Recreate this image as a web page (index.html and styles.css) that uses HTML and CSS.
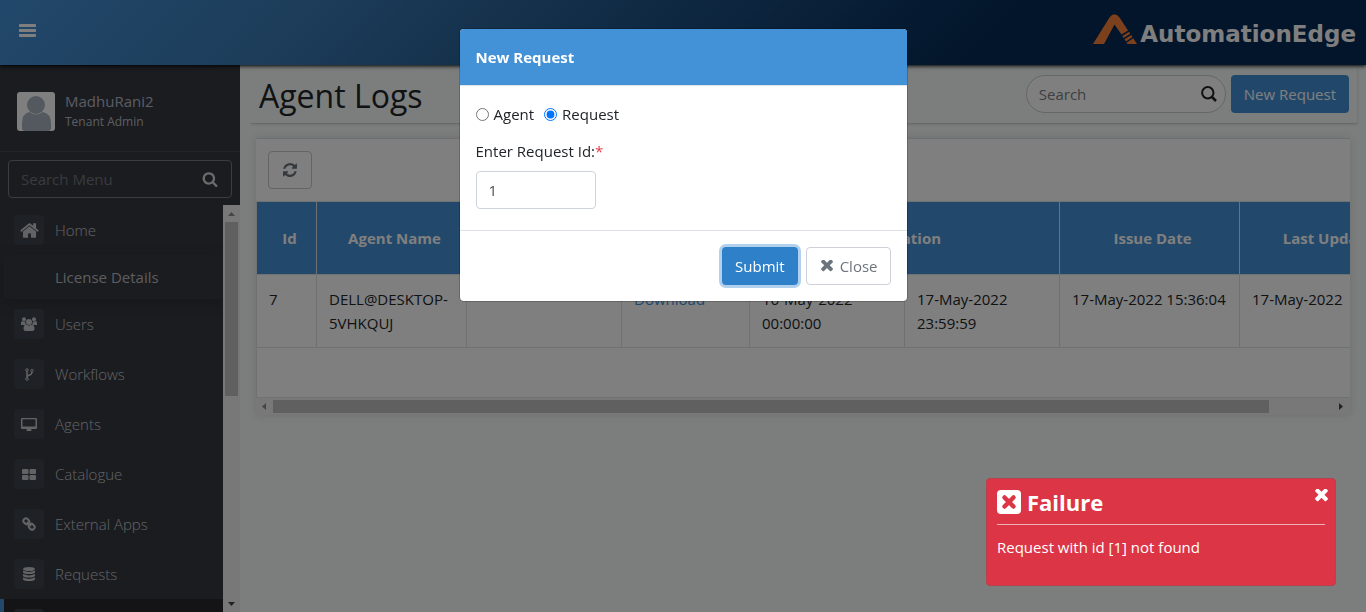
FILE: index.html
```html
<!DOCTYPE html>
<html lang="en">
<head>
<meta charset="utf-8">
<title>Agent Logs</title>
<link rel="stylesheet" href="styles.css">
</head>
<body>
<svg class="sprite" aria-hidden="true">
  <symbol id="i-search" viewBox="0 0 1664 1792"><path d="M1152 832q0-185-131.500-316.500t-316.500-131.500-316.500 131.500-131.500 316.500 131.500 316.500 316.500 131.500 316.500-131.500 131.500-316.500zm512 832q0 52-38 90t-90 38q-54 0-90-38l-343-342q-179 124-399 124-143 0-273.500-55.500t-225-150-150-225-55.500-273.500 55.500-273.500 150-225 225-150 273.500-55.500 273.500 55.500 225 150 150 225 55.500 273.500q0 220-124 399l343 343q37 37 37 90z"/></symbol>
  <symbol id="i-times" viewBox="296 430 1200 1190"><path d="M1490 1322q0 40-28 68l-136 136q-28 28-68 28t-68-28l-294-294-294 294q-28 28-68 28t-68-28l-136-136q-28-28-28-68t28-68l294-294-294-294q-28-28-28-68t28-68l136-136q28-28 68-28t68 28l294 294 294-294q28-28 68-28t68 28l136 136q28 28 28 68t-28 68l-294 294 294 294q28 28 28 68z"/></symbol>
</svg>

<header class="topbar">
  <button class="menu-toggle" aria-label="Toggle menu">
    <svg viewBox="0 0 17 13" width="17" height="13"><path d="M1 0h15a1 1 0 0 1 1 1v2H0V1a1 1 0 0 1 1-1zM0 5h17v3H0zM0 10h17v2a1 1 0 0 1-1 1H1a1 1 0 0 1-1-1z"/></svg>
  </button>
  <a class="brand" href="#">
    <svg class="brand-mark" viewBox="0 0 44 30" width="44" height="30"><path d="M0 30 16.500 3.500Q21.500-3 26.500 3.500L35 16.500 28.500 20.500 21.500 10.500 11 30z"/><path d="M29.300 22 36 17.800l1.300 2-6.700 4.200zM31.500 25.300 38.200 21l1.300 2-6.500 4.500zM33.500 28.800 40.300 24.300 44 30h-9.500z"/></svg>
    <span class="brand-name">AutomationEdge</span>
  </a>
</header>

<div class="layout">
  <aside class="sidebar">
    <div class="profile">
      <svg class="avatar" viewBox="0 0 38 39" width="38" height="39"><rect width="38" height="39" rx="3" fill="#fff"/><circle cx="19" cy="13" r="9" fill="#a9b2be"/><path d="M5 36V32Q5 21 12.500 20q6.500 5 13 0Q34 21 34 32v4q0 3-3 3H8q-3 0-3-3z" fill="#a9b2be"/></svg>
      <div>
        <div class="profile-name">MadhuRani2</div>
        <div class="profile-role">Tenant Admin</div>
      </div>
    </div>
    <div class="menu-search">
      <input type="text" placeholder="Search Menu" aria-label="Search Menu">
      <button aria-label="Search"><svg width="16" height="16"><use href="#i-search"/></svg></button>
    </div>
    <div class="menu-scroll">
      <nav class="menu">
        <a href="#"><span class="tile"><svg viewBox="60 240 1670 1310" width="19" height="15"><path d="M1472 992v480q0 26-19 45t-45 19h-384v-384h-256v384h-384q-26 0-45-19t-19-45v-480q0-1 .5-3t.5-3l575-474 575 474q1 2 1 6zm223-69l-62 74q-8 9-21 11h-3q-13 0-21-7l-692-577-692 577q-12 8-24 7-13-2-21-11l-62-74q-8-10-7-23.500t11-21.500l719-599q32-26 76-26t76 26l244 204v-195q0-14 9-23t23-9h192q14 0 23 9t9 23v408l219 182q10 8 11 21.500t-7 23.500z"/></svg></span>Home</a>
        <a href="#" class="sub">License Details</a>
        <a href="#"><span class="tile"><svg viewBox="0 0 16 14" width="16" height="14"><circle cx="3" cy="2.200" r="2"/><circle cx="13" cy="2.200" r="2"/><circle cx="8" cy="5" r="3"/><path d="M0 8V6q0-2 1.500-2Q3 5.200 4.300 4.300 4 6.500 5 8zM16 8V6q0-2-1.500-2-1.500 1.200-2.800.3.300 2.200-.7 3.700zM2.500 12q0-4.500 2.800-4.500 2.700 2 5.400 0 2.800 0 2.800 4.500 0 2-2 2h-7q-2 0-2-2z"/></svg></span>Users</a>
        <a href="#"><span class="tile"><svg viewBox="0 0 9 13" width="9" height="13" fill="none"><path d="M2 3v7M7 3.500Q7 6.500 4.500 7 2 7.500 2 9.500" stroke="currentColor" stroke-width="1.500"/><g fill="#3c424a" stroke="currentColor"><circle cx="2" cy="2" r="1.300"/><circle cx="2" cy="11" r="1.300"/><circle cx="7" cy="2.700" r="1.300"/></g></svg></span>Workflows</a>
        <a href="#"><span class="tile"><svg viewBox="0 0 16 13" width="16" height="13"><path fill-rule="evenodd" d="M1 0h14a1 1 0 0 1 1 1v9a1 1 0 0 1-1 1H1a1 1 0 0 1-1-1V1a1 1 0 0 1 1-1zm.5 1.300v7.200h13V1.300zM6 11h4l.5 1.200V13h-5v-.8z"/></svg></span>Agents</a>
        <a href="#"><span class="tile"><svg viewBox="0 0 14 11" width="14" height="11"><rect width="6.500" height="5" rx="1"/><rect x="7.500" width="6.500" height="5" rx="1"/><rect y="6" width="6.500" height="5" rx="1"/><rect x="7.500" y="6" width="6.500" height="5" rx="1"/></svg></span>Catalogue</a>
        <a href="#"><span class="tile"><svg viewBox="0 0 14 14" width="14" height="14" fill="none" stroke="currentColor" stroke-width="2"><rect x="1.300" y="1.800" width="6" height="5" rx="2.300" transform="rotate(45 4.300 4.300)"/><rect x="6.700" y="7.200" width="6" height="5" rx="2.300" transform="rotate(45 9.700 9.700)"/><path d="m5 5 4 4"/></svg></span>External Apps</a>
        <a href="#"><span class="tile"><svg viewBox="0 0 12 14" width="12" height="14"><ellipse cx="6" cy="2" rx="6" ry="2"/><path d="M0 3.500q6 2.800 12 0V5Q12 7 6 7T0 5zM0 7q6 2.800 12 0v1.500q0 2-6 2t-6-2zM0 10.500q6 2.800 12 0V12q0 2-6 2t-6-2z"/></svg></span>Requests</a>
        <a href="#" class="active" aria-label="Agent Logs"><span class="tile"></span></a>
      </nav>
      <div class="rail rail-y" aria-hidden="true"><i class="arrow up"></i><i class="thumb"></i><i class="arrow down"></i></div>
    </div>
  </aside>

  <main class="content">
    <div class="page-head">
      <h1>Agent Logs</h1>
      <div class="search">
        <input type="text" placeholder="Search" aria-label="Search">
        <svg viewBox="0 0 16 16" width="16" height="16" fill="none" stroke="#222" stroke-width="2"><circle cx="6.800" cy="6.800" r="5.700"/><path d="m11 11 4 4" stroke-width="2.500"/></svg>
      </div>
      <button class="btn primary">New Request</button>
    </div>
    <section class="card">
      <div class="toolbar">
        <button class="btn plain refresh" aria-label="Refresh"><svg viewBox="128 128 1540 1540" width="14" height="14"><path d="M1639 1056q0 5-1 7-64 268-268 434.500t-478 166.500q-146 0-282.500-55t-243.500-157l-129 129q-19 19-45 19t-45-19-19-45v-448q0-26 19-45t45-19h448q26 0 45 19t19 45-19 45l-137 137q71 66 161 102t187 36q134 0 250-65t186-179q11-17 53-117 8-23 30-23h192q13 0 22.500 9.500t9.500 22.500zm25-800v448q0 26-19 45t-45 19h-448q-26 0-45-19t-19-45 19-45l138-138q-148-137-349-137-134 0-250 65t-186 179q-11 17-53 117-8 23-30 23h-199q-13 0-22.500-9.500t-9.500-22.500v-7q65-268 270-434.500t480-166.500q146 0 284 55.500t245 156.500l130-129q19-19 45-19t45 19 19 45z"/></svg></button>
      </div>
      <div class="table-wrap">
        <table>
          <colgroup><col class="c-id"><col class="c-name"><col class="c-mid"><col class="c-link"><col class="c-mid"><col class="c-mid"><col class="c-date"><col class="c-date"></colgroup>
          <thead>
            <tr><th>Id</th><th>Agent Name</th><th></th><th></th><th colspan="2">Duration</th><th>Issue Date</th><th>Last Updated</th></tr>
          </thead>
          <tbody>
            <tr><td>7</td><td>DELL@DESKTOP-5VHKQUJ</td><td></td><td><a href="#">Download</a></td><td>16-May-2022 00:00:00</td><td>17-May-2022 23:59:59</td><td>17-May-2022 15:36:04</td><td>17-May-2022</td></tr>
          </tbody>
        </table>
      </div>
      <div class="rail rail-x" aria-hidden="true"><i class="arrow left"></i><i class="thumb"></i><i class="arrow right"></i></div>
    </section>
  </main>
</div>

<div class="backdrop">
  <form class="modal" role="dialog" aria-labelledby="modal-title">
    <h2 class="modal-head" id="modal-title">New Request</h2>
    <div class="modal-body">
      <div class="choices">
        <label><input type="radio" name="kind">Agent</label>
        <label><input type="radio" name="kind" checked>Request</label>
      </div>
      <label class="field-label" for="request-id">Enter Request Id:<span class="required">*</span></label>
      <input class="field" id="request-id" type="text" value="1">
    </div>
    <div class="modal-foot">
      <button type="button" class="btn submit">Submit</button>
      <button type="button" class="btn plain close"><svg width="12" height="12"><use href="#i-times"/></svg>Close</button>
    </div>
  </form>
</div>

<div class="toast" role="alert">
  <div class="toast-head">
    <svg viewBox="0 0 24 24" width="24" height="24"><rect width="24" height="24" rx="4" fill="#fff"/><path d="m7.500 7.500 9 9m0-9-9 9" stroke="#dc3545" stroke-width="4.500" stroke-linecap="round"/></svg>
    <strong>Failure</strong>
  </div>
  <p>Request with id [1] not found</p>
  <button class="toast-close" aria-label="Close"><svg width="13" height="13"><use href="#i-times"/></svg></button>
</div>
</body>
</html>
```

FILE: styles.css
```css
* { box-sizing: border-box; }
body {
  margin: 0;
  height: 100vh;
  overflow: hidden;
  display: flex;
  flex-direction: column;
  background: #f6fcfa;
  color: #212529;
  font: 15px/24px "Open Sans", "Noto Sans", sans-serif;
}
svg { fill: currentColor; flex: none; }
svg[fill="none"] { fill: none; }
a { color: #4391d6; text-decoration: none; }
button, input { font: inherit; color: inherit; }
button { border: 0; background: none; padding: 0; }
.sprite { position: absolute; width: 0; height: 0; }

.topbar {
  position: relative;
  z-index: 1;
  flex: none;
  height: 65px;
  padding: 0 10px 0 19px;
  display: flex;
  align-items: center;
  justify-content: space-between;
  background: linear-gradient(135deg, #4490d6 0%, #3a7ab4 22%, #042a56 72%);
  box-shadow: 0 1px 4px #000;
  color: #fff;
}
.menu-toggle { display: flex; margin-bottom: 4px; }
.brand { display: flex; align-items: flex-end; gap: 3px; color: #fff; margin-bottom: 8px; }
.brand-mark { color: #f98239; }
.brand-name { font: bold 23px/20px "DejaVu Sans", sans-serif; }

.layout { flex: 1; min-height: 0; display: flex; }
.sidebar {
  width: 240px;
  flex: none;
  display: flex;
  flex-direction: column;
  background: #363840;
  color: #b8bcc4;
}
.profile {
  display: flex;
  align-items: center;
  gap: 10px;
  height: 87px;
  padding: 6px 17px 0;
  border-bottom: 1px solid #464850;
}
.profile-name { line-height: 22px; color: #b4bac8; }
.profile-role { font-size: 12px; line-height: 20px; }
.menu-search {
  display: flex;
  align-items: center;
  height: 38px;
  margin: 8px 8px 7px;
  padding: 0 13px 0 12px;
  border: 1px solid #777a83;
  border-radius: 4px;
}
.menu-search input { flex: 1; min-width: 0; border: 0; padding: 0; background: none; outline: 0; }
.menu-search input::placeholder { color: #70767e; }
.menu-search button { display: flex; color: #d8d8d8; }
.menu-scroll { flex: 1; min-height: 0; display: flex; overflow: hidden; }
.menu { flex: 1; min-width: 0; display: flex; flex-direction: column; }
.menu a {
  flex: none;
  display: flex;
  align-items: center;
  gap: 11px;
  height: 50px;
  padding-left: 14px;
  color: #c4c6ca;
  font-weight: 300;
}
.menu .sub {
  height: 44px;
  margin-left: 4px;
  padding-left: 51px;
  font-weight: 400;
  color: #b9bbbf;
  box-shadow: 0 4px 10px #2d2f35;
}
.menu .active { background: #28292c; border-left: 4px solid #4490d6; padding-left: 10px; }
.tile {
  width: 30px;
  height: 30px;
  display: flex;
  align-items: center;
  justify-content: center;
  border-radius: 4px;
  background: #3c424a;
}

.rail { flex: none; display: flex; align-items: center; background: #f1f1f1; }
.rail-y { width: 17px; flex-direction: column; }
.rail-x { height: 17px; }
.rail .thumb { background: #c1c1c1; }
.rail-y .thumb { width: 13px; height: 174px; margin-bottom: auto; }
.rail-x .thumb { height: 13px; width: 91%; margin-right: auto; }
.arrow { width: 7px; height: 4px; margin: 7px 5px 6px; background: #444; }
.up { clip-path: polygon(0 100%, 50% 0, 100% 100%); background: #8a8a8a; }
.down { clip-path: polygon(0 0, 50% 100%, 100% 0); }
.left, .right { width: 4px; height: 7px; margin: 0 7px 0 6px; }
.left { clip-path: polygon(100% 0, 0 50%, 100% 100%); background: #8a8a8a; }
.right { clip-path: polygon(0 0, 100% 50%, 0 100%); }

.content { flex: 1; min-width: 0; padding: 3px 9px 0 11px; }
.page-head {
  display: flex;
  align-items: flex-start;
  gap: 5px;
  height: 56px;
  padding: 7px 8px 0;
  border-bottom: 1px solid #d0d2d2;
  box-shadow: 1px 1px 2px #e3e6e5;
}
h1 { flex: 1; margin: 0; font-size: 32px; line-height: 42px; font-weight: 500; }
.btn {
  display: flex;
  align-items: center;
  justify-content: center;
  height: 38px;
  padding: 0 13px;
  border-radius: 4px;
}
.primary { background: #4391d6; color: #fff; }
.plain { background: #fff; border: 1px solid #cdd0d8; color: #6c757d; }
.search {
  width: 200px;
  height: 38px;
  padding: 0 8px 0 12px;
  display: flex;
  align-items: center;
  background: #fff;
  border: 1px solid #c8ccd4;
  border-radius: 19px;
}
.search input { flex: 1; min-width: 0; border: 0; padding: 0; background: none; outline: 0; }
.search input::placeholder { color: #7a7e84; }

.card { margin: 14px 7px 0 5px; background: #fff; border-top: 1px solid #dcdfea; box-shadow: 0 0 8px #dcdfde; }
.toolbar { padding: 12px 12px 12px; }
.refresh { width: 44px; color: #6c757d; border-color: #c8c8c8; }
.table-wrap { height: 197px; overflow: hidden; border: solid #dee2e6; border-width: 1px 0 1px 1px; }
table { table-layout: fixed; width: 1162px; border-collapse: separate; border-spacing: 0; }
.c-id { width: 60px; }
.c-name { width: 150px; }
.c-mid { width: 155px; }
.c-link { width: 128px; }
.c-date { width: 180px; }
th {
  height: 72px;
  padding: 0 4px 0 10px;
  background: #4490d6;
  color: #fff;
  border-right: 1px solid #dee2e6;
  font-weight: 700;
  white-space: nowrap;
}
td {
  height: 74px;
  padding: 12px 0 0 12px;
  vertical-align: top;
  border: solid #dee2e6;
  border-width: 1px 1px 1px 0;
}

.backdrop {
  position: fixed;
  inset: 0;
  z-index: 2;
  display: flex;
  align-items: flex-start;
  justify-content: center;
  padding-top: 29px;
  background: rgba(0, 0, 0, .5);
}
.modal { width: 447px; background: #fff; border-radius: 4px; overflow: hidden; box-shadow: 0 0 0 1px rgba(0, 0, 0, .2); }
.modal-head {
  margin: 0;
  padding: 16px;
  background: #4391d6;
  border-bottom: 1px solid #dee2e6;
  color: #fff;
  font-size: 15px;
  line-height: 24px;
  font-weight: 700;
}
.modal-body { padding: 16px 16px 21px; }
.choices { display: flex; gap: 10px; }
.choices label { display: flex; align-items: center; gap: 5px; }
.choices input { width: 13px; height: 13px; margin: 0; accent-color: #0075ff; }
.field-label { display: block; margin: 13px 0 8px; }
.required { color: #e63946; }
.field {
  display: block;
  width: 120px;
  height: 38px;
  padding: 0 12px;
  border: 1px solid #ced4da;
  border-radius: 4px;
  color: #495057;
}
.modal-foot { display: flex; justify-content: flex-end; gap: 8px; padding: 16px; border-top: 1px solid #dee2e6; }
.submit { background: #2e80c9; color: #fff; box-shadow: 0 0 0 3px #b0d0ee; }
.close { gap: 7px; padding: 0 12px 0 14px; }

.toast {
  position: fixed;
  z-index: 3;
  right: 30px;
  bottom: 26px;
  width: 350px;
  height: 108px;
  padding: 10px;
  background: #dc3545;
  border: 1px solid #b5424c;
  border-radius: 4px;
  color: #fff;
}
.toast-head { display: flex; align-items: center; gap: 6px; padding-bottom: 8px; border-bottom: 1px solid #edb0b6; }
.toast-head svg { margin-top: -2px; }
.toast-head strong { font-size: 22px; line-height: 27px; font-weight: 700; }
.toast p { margin: 10px 0 0; }
.toast-close { position: absolute; top: 10px; right: 7px; display: flex; }
```
